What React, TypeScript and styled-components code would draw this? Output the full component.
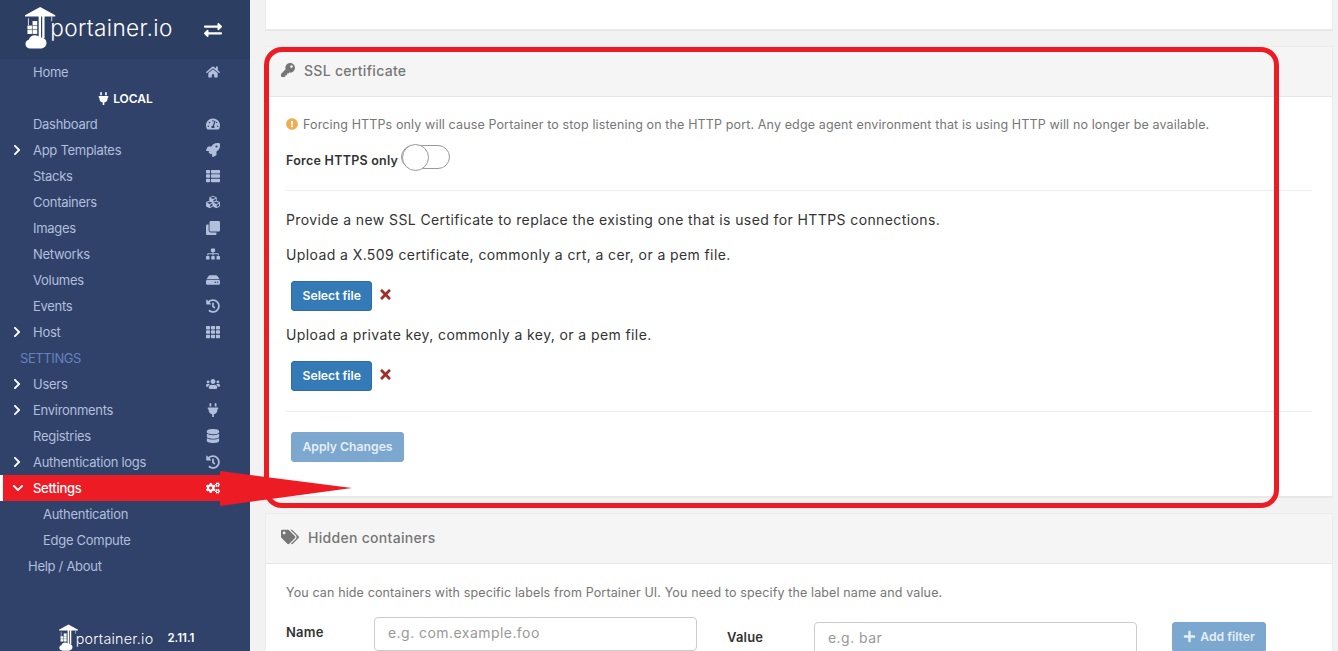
import styled, { createGlobalStyle } from "styled-components";
import type { ComponentType } from "react";
import {
  FaChevronDown,
  FaChevronRight,
  FaClone,
  FaCogs,
  FaCubes,
  FaDatabase,
  FaExchangeAlt,
  FaExclamationCircle,
  FaHdd,
  FaHistory,
  FaHome,
  FaKey,
  FaPlug,
  FaPlus,
  FaRocket,
  FaSitemap,
  FaTags,
  FaTachometerAlt,
  FaTh,
  FaThList,
  FaTimes,
  FaUsers,
} from "react-icons/fa";

const GlobalStyle = createGlobalStyle`
  html, body {
    margin: 0;
    height: 651px;
    overflow: hidden;
    background: #f2f2f2;
  }
  * { box-sizing: border-box; }
  body {
    font-family: Inter, "Noto Sans", "Liberation Sans", sans-serif;
    font-size: 13px;
    color: #333;
  }
`;

const Page = styled.div`
  position: relative;
  display: flex;
  width: 1338px;
  height: 651px;
  overflow: hidden;
`;

const Sidebar = styled.aside`
  display: flex;
  flex-direction: column;
  width: 250px;
  flex-shrink: 0;
  background: #30426a;
`;

const Brand = styled.div`
  display: flex;
  align-items: center;
  justify-content: space-between;
  height: 59px;
  padding: 0 28px 0 25px;
  background: #2d3e63;
  color: #fff;
`;

const LogoWrap = styled.div<{ $small?: boolean }>`
  display: flex;
  align-items: center;
  height: ${(p) => (p.$small ? "27px" : "43px")};
  margin-top: ${(p) => (p.$small ? "0" : "-4px")};
  color: #fff;
  svg { height: 100%; width: auto; display: block; }
`;

const LogoText = styled.span<{ $small?: boolean }>`
  font-size: ${(p) => (p.$small ? "14.3px" : "22.6px")};
  font-weight: 300;
  letter-spacing: ${(p) => (p.$small ? "0.25px" : "0.35px")};
  margin-left: ${(p) => (p.$small ? "-3px" : "-6px")};
  margin-top: ${(p) => (p.$small ? "2px" : "0")};
`;

const Nav = styled.nav`
  display: flex;
  flex-direction: column;
`;

const Row = styled.div<{ $active?: boolean; $indent?: number }>`
  position: relative;
  display: flex;
  align-items: center;
  height: 26px;
  padding-left: ${(p) => p.$indent ?? 33}px;
  padding-right: 29px;
  font-size: 13px;
  letter-spacing: -0.28px;
  color: ${(p) => (p.$active ? "#fff" : "#b1bfdc")};
  font-weight: ${(p) => (p.$active ? 500 : 400)};
  background: ${(p) => (p.$active ? "#ed1c24" : "transparent")};
  border-left: ${(p) => (p.$active ? "3px solid #fff" : "none")};
`;

const Chevron = styled.span<{ $active?: boolean }>`
  position: absolute;
  left: ${(p) => (p.$active ? "9px" : "11px")};
  top: 7px;
  display: flex;
  color: #fff;
  font-size: 12px;
`;

const RowIcon = styled.span<{ $active?: boolean }>`
  margin-left: auto;
  width: 16px;
  display: flex;
  justify-content: center;
  font-size: 14px;
  color: ${(p) => (p.$active ? "#fff" : "#b1bfdc")};
`;

const EndpointName = styled.div`
  display: flex;
  align-items: center;
  justify-content: center;
  gap: 3px;
  height: 26px;
  color: #fff;
  font-size: 12px;
  font-weight: 600;
`;

const SectionTitle = styled.div`
  display: flex;
  align-items: center;
  height: 26px;
  padding-left: 20px;
  font-size: 13px;
  letter-spacing: -0.4px;
  color: #6582bd;
`;

const SidebarFooter = styled.div`
  display: flex;
  align-items: center;
  margin-top: auto;
  padding: 0 0 0 59px;
  gap: 14px;
  height: 27px;
  color: #fff;
`;

const Version = styled.span`
  font-size: 11.5px;
  font-weight: 600;
`;

const Main = styled.main`
  flex: 1;
  min-width: 0;
  padding: 0 5px 0 15px;
  display: flex;
  flex-direction: column;
  gap: 15px;
`;

const Panel = styled.section`
  flex-shrink: 0;
  background: #fff;
  border: 1px solid #ececec;
  border-bottom: 2px solid #e8e8e8;
`;

const StubPanel = styled(Panel)`
  height: 31px;
  border-top: none;
`;

const PanelHeader = styled.header`
  display: flex;
  align-items: center;
  height: 50px;
  padding: 0 0 3px 15px;
  gap: 9px;
  background: #f5f5f5;
  border-bottom: 1px solid #e6e6e6;
  color: #767676;
  font-size: 14px;
  font-weight: 500;
  letter-spacing: 0.3px;
`;

const PanelBody = styled.div`
  padding: 0 20px;
`;

const Note = styled.p<{ $top: number }>`
  display: flex;
  align-items: center;
  gap: 5px;
  margin: ${(p) => p.$top}px 0 0;
  height: 16px;
  color: #767676;
  font-size: 12.5px;
  letter-spacing: 0.13px;
  white-space: nowrap;
`;

const WarnIcon = styled.span`
  display: flex;
  color: #f0ad4e;
  font-size: 12px;
`;

const ToggleRow = styled.div`
  display: flex;
  align-items: center;
  gap: 3px;
  margin-top: 12px;
  height: 26px;
  font-size: 12.5px;
  font-weight: 600;
  letter-spacing: 0.25px;
  color: #333;
`;

const ToggleLabel = styled.span`
  margin-top: 6px;
`;

const Toggle = styled.span`
  position: relative;
  display: block;
  width: 49px;
  height: 24px;
  background: #fff;
  border: 1px solid #999;
  border-radius: 12px;

  &::before {
    content: "";
    position: absolute;
    left: 0;
    top: -2px;
    width: 25px;
    height: 25px;
    border-radius: 50%;
    background: #fff;
    border: 1px solid #999;
  }
`;

const Divider = styled.hr<{ $top: number }>`
  margin: ${(p) => p.$top}px 0 0;
  border: none;
  border-top: 1px solid #eee;
`;

const Paragraph = styled.p<{ $top: number }>`
  margin: ${(p) => p.$top}px 0 0;
  height: 18px;
  line-height: 18px;
  font-size: 14px;
  letter-spacing: 0.4px;
  color: #333;
  white-space: nowrap;
`;

const FileRow = styled.div`
  display: flex;
  align-items: center;
  gap: 6px;
  margin: 17px 0 0 5px;
`;

const Button = styled.button<{ $disabled?: boolean }>`
  display: inline-flex;
  align-items: center;
  justify-content: center;
  gap: 4px;
  height: 30px;
  padding: 0 10.5px 2px;
  border: 1px solid ${(p) => (p.$disabled ? "#7ba6cd" : "#2e6da4")};
  border-radius: 3px;
  background: ${(p) => (p.$disabled ? "#7ca7ce" : "#337ab7")};
  color: ${(p) => (p.$disabled ? "#e6eef6" : "#fff")};
  font: inherit;
  font-size: 12.2px;
  font-weight: 600;
  white-space: nowrap;
`;

const ClearMark = styled.span`
  display: flex;
  color: #a52a2a;
  font-size: 15px;
  margin-top: -3px;
`;

const ActionRow = styled.div`
  margin: 20px 0 0 5px;
  padding-bottom: 34px;
`;

const FilterRow = styled.div`
  display: flex;
  align-items: flex-start;
  margin-top: 17px;
`;

const FieldLabel = styled.label<{ $width: number; $top: number }>`
  width: ${(p) => p.$width}px;
  margin-top: ${(p) => p.$top}px;
  font-size: 13px;
  font-weight: 600;
  letter-spacing: 0.2px;
  color: #333;
`;

const TextInput = styled.input<{ $top?: number; $gap?: number }>`
  width: 323px;
  height: 34px;
  padding: 0 12px 3px 13px;
  margin-top: ${(p) => p.$top ?? 0}px;
  margin-right: ${(p) => p.$gap ?? 0}px;
  border: 1px solid #ccc;
  border-radius: 4px;
  font: inherit;
  font-size: 14px;
  letter-spacing: 0.45px;
  &::placeholder { color: #999; opacity: 1; }
`;

const AddButton = styled(Button)`
  margin-top: 5px;
  width: 94px;
  padding: 0 0 2px;
`;

const RedFrame = styled.div`
  position: absolute;
  left: 264px;
  top: 47px;
  width: 1015px;
  height: 461px;
  border: 5px solid #ed1c24;
  border-radius: 18px;
  pointer-events: none;
`;

const RedArrow = styled.svg`
  position: absolute;
  left: 220px;
  top: 470px;
  width: 134px;
  height: 37px;
`;

const menu: {
  label: string;
  icon: ComponentType;
  expand?: boolean;
}[] = [
  { label: "Dashboard", icon: FaTachometerAlt },
  { label: "App Templates", icon: FaRocket, expand: true },
  { label: "Stacks", icon: FaThList },
  { label: "Containers", icon: FaCubes },
  { label: "Images", icon: FaClone },
  { label: "Networks", icon: FaSitemap },
  { label: "Volumes", icon: FaHdd },
  { label: "Events", icon: FaHistory },
  { label: "Host", icon: FaTh, expand: true },
];

const settingsMenu: typeof menu = [
  { label: "Users", icon: FaUsers, expand: true },
  { label: "Environments", icon: FaPlug, expand: true },
  { label: "Registries", icon: FaDatabase },
  { label: "Authentication logs", icon: FaHistory, expand: true },
];

function Logo({ small }: { small?: boolean }) {
  return (
    <LogoWrap $small={small}>
      <svg viewBox="0 0 32 44" fill="currentColor">
        <path d="M0 9.5 15.5 1l15.500 8.500v1.200H20v22h-2.400v-22h-1.200v22H14v-22H0z" fillRule="evenodd" />
        <path d="M3 12.500h.8v7H3zM27 10.700h.8v5H27z" />
        <rect x="2.500" y="20" width="4.600" height="4" />
        <rect x="7.700" y="20" width="4.800" height="4" />
        <rect x="7.700" y="15.400" width="4.800" height="4" />
        <rect x="2.500" y="24.600" width="4.600" height="4" />
        <rect x="7.700" y="24.600" width="4.800" height="4" />
        <path d="M5.500 43.500c-3 0-5-2-5-4.600 0-2.200 1.400-3.800 3.300-4.300C4.600 31.800 7 30 10 30c2.200 0 4 .9 5 2.400 3.400-.8 7 1.600 7 5.200 0 3.400-2.500 5.900-6 5.900z" />
      </svg>
      <LogoText $small={small}>portainer.io</LogoText>
    </LogoWrap>
  );
}

function MenuRow({
  label,
  icon: Icon,
  expand,
}: {
  label: string;
  icon: ComponentType;
  expand?: boolean;
}) {
  return (
    <Row>
      {expand && (
        <Chevron>
          <FaChevronRight />
        </Chevron>
      )}
      {label}
      <RowIcon>
        <Icon />
      </RowIcon>
    </Row>
  );
}

export default function App() {
  return (
    <Page>
      <GlobalStyle />
      <Sidebar>
        <Brand>
          <Logo />
          <FaExchangeAlt size={18} />
        </Brand>
        <Nav>
          <MenuRow label="Home" icon={FaHome} />
          <EndpointName>
            <FaPlug size={13} /> LOCAL
          </EndpointName>
          {menu.map((item) => (
            <MenuRow key={item.label} {...item} />
          ))}
          <SectionTitle>SETTINGS</SectionTitle>
          {settingsMenu.map((item) => (
            <MenuRow key={item.label} {...item} />
          ))}
          <Row $active $indent={30}>
            <Chevron $active>
              <FaChevronDown />
            </Chevron>
            Settings
            <RowIcon $active>
              <FaCogs />
            </RowIcon>
          </Row>
          <Row $indent={43}>Authentication</Row>
          <Row $indent={43}>Edge Compute</Row>
          <Row $indent={28}>Help / About</Row>
        </Nav>
        <SidebarFooter>
          <Logo small />
          <Version>2.11.1</Version>
        </SidebarFooter>
      </Sidebar>

      <Main>
        <StubPanel />
        <Panel>
          <PanelHeader>
            <FaKey size={14} />
            SSL certificate
          </PanelHeader>
          <PanelBody>
            <Note $top={19}>
              <WarnIcon>
                <FaExclamationCircle />
              </WarnIcon>
              Forcing HTTPs only will cause Portainer to stop listening on the HTTP port. Any edge
              agent environment that is using HTTP will no longer be available.
            </Note>
            <ToggleRow>
              <ToggleLabel>Force HTTPS only</ToggleLabel>
              <Toggle />
            </ToggleRow>
            <Divider $top={20} />
            <Paragraph $top={20}>
              Provide a new SSL Certificate to replace the existing one that is used for HTTPS
              connections.
            </Paragraph>
            <Paragraph $top={17}>
              Upload a X.509 certificate, commonly a crt, a cer, or a pem file.
            </Paragraph>
            <FileRow>
              <Button>Select file</Button>
              <ClearMark>
                <FaTimes />
              </ClearMark>
            </FileRow>
            <Paragraph $top={15}>Upload a private key, commonly a key, or a pem file.</Paragraph>
            <FileRow>
              <Button>Select file</Button>
              <ClearMark>
                <FaTimes />
              </ClearMark>
            </FileRow>
            <Divider $top={20} />
            <ActionRow>
              <Button $disabled>Apply Changes</Button>
            </ActionRow>
          </PanelBody>
        </Panel>
        <Panel>
          <PanelHeader>
            <FaTags size={18} />
            Hidden containers
          </PanelHeader>
          <PanelBody>
            <Note $top={20}>
              You can hide containers with specific labels from Portainer UI. You need to specify
              the label name and value.
            </Note>
            <FilterRow>
              <FieldLabel $width={88} $top={7}>
                Name
              </FieldLabel>
              <TextInput placeholder="e.g. com.example.foo" $gap={30} />
              <FieldLabel $width={87} $top={12}>
                Value
              </FieldLabel>
              <TextInput placeholder="e.g. bar" $top={5} $gap={35} />
              <AddButton $disabled>
                <FaPlus size={13} /> Add filter
              </AddButton>
            </FilterRow>
          </PanelBody>
        </Panel>
      </Main>

      <RedFrame />
      <RedArrow viewBox="0 0 134 37">
        <polygon points="0,1 132,18 0,36" fill="#ed1c24" />
      </RedArrow>
    </Page>
  );
}
